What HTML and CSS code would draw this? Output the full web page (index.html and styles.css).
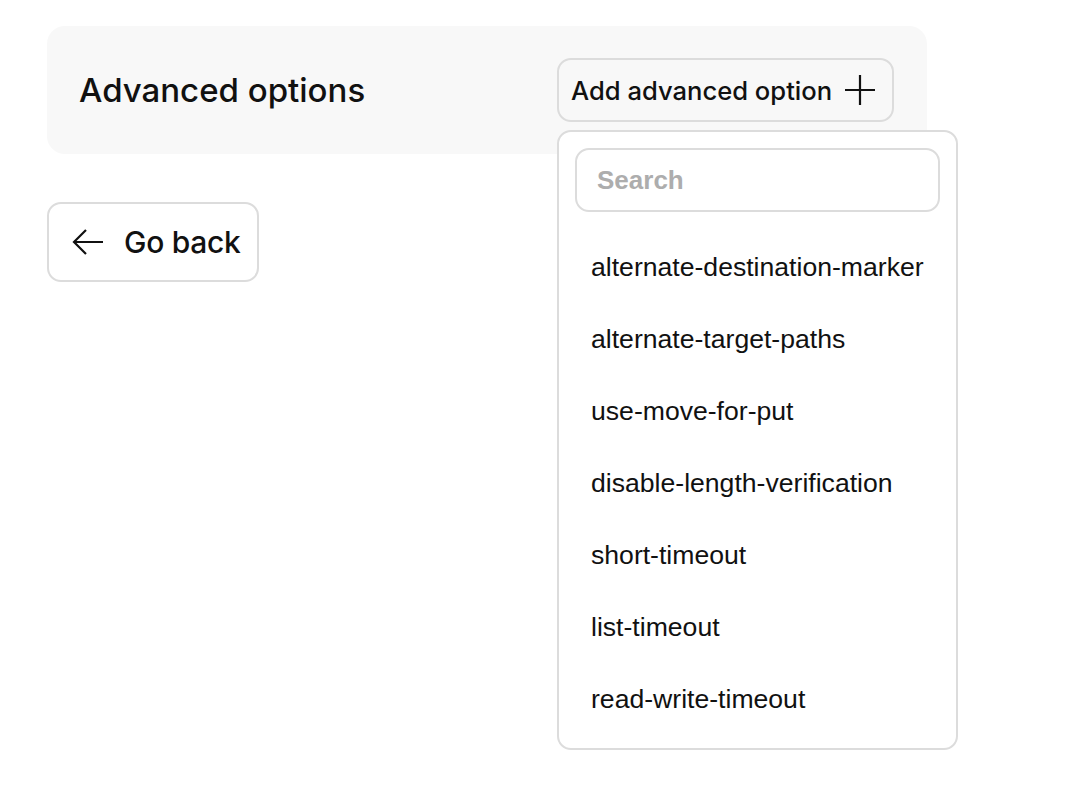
FILE: index.html
```html
<!DOCTYPE html>
<html>
<head>
<meta charset="utf-8">
<link rel="stylesheet" href="styles.css">
</head>
<body>
<div class="page">
  <div class="panel">
    <h2 class="title">Advanced options</h2>
    <div class="add-wrap">
      <button class="add-btn">Add advanced option
        <svg class="plus" width="30" height="30" viewBox="0 0 30 30"><path d="M15 0V30M0 15H30" stroke="#111" stroke-width="2.2" fill="none"/></svg>
      </button>
      <div class="dropdown">
        <div class="search">Search</div>
        <ul class="list">
          <li>alternate-destination-marker</li>
          <li>alternate-target-paths</li>
          <li>use-move-for-put</li>
          <li>disable-length-verification</li>
          <li>short-timeout</li>
          <li>list-timeout</li>
          <li>read-write-timeout</li>
        </ul>
      </div>
    </div>
  </div>
  <button class="back-btn">
    <svg class="arrow" width="32" height="28" viewBox="0 0 32 28"><path d="M31 14H2M14 2L2 14L14 26" stroke="#111" stroke-width="2.2" fill="none"/></svg>
    Go back
  </button>
</div>
</body>
</html>
```

FILE: styles.css
```css
html, body {
  margin: 0;
  padding: 0;
  background: #ffffff;
}
body {
  min-height: 796px;
}
.page {
  min-height: 796px;
  box-sizing: border-box;
  padding: 26px 0 0 47px;
  font-family: Inter, "Liberation Sans", sans-serif;
  color: #111;
}
.panel {
  width: 880px;
  height: 128px;
  box-sizing: border-box;
  background: #f8f8f8;
  border-radius: 18px;
  display: flex;
  align-items: center;
  justify-content: space-between;
  padding: 0 33px 0 32px;
}
.title {
  margin: 0;
  font-size: 33px;
  font-weight: 500;
}
.add-wrap {
  position: relative;
}
.add-btn {
  width: 337px;
  height: 64px;
  box-sizing: border-box;
  border: 2px solid #dcdcdc;
  border-radius: 14px;
  background: #f8f8f8;
  display: flex;
  align-items: center;
  padding: 0 0 0 12px;
  font-family: Inter, "Liberation Sans", sans-serif;
  font-size: 25.6px;
  font-weight: 500;
  color: #111;
}
.plus {
  margin-left: 13px;
}
.dropdown {
  position: absolute;
  left: 0;
  top: 72px;
  width: 401px;
  height: 620px;
  box-sizing: border-box;
  background: #fff;
  border: 2px solid #dcdcdc;
  border-radius: 14px;
  padding: 16px;
  z-index: 5;
}
.search {
  width: 365px;
  height: 64px;
  box-sizing: border-box;
  border: 2px solid #dcdcdc;
  border-radius: 14px;
  padding: 0 20px;
  display: flex;
  align-items: center;
  font-family: "Liberation Sans", Arial, sans-serif;
  font-weight: 700;
  font-size: 26px;
  color: #adadad;
}
.list {
  list-style: none;
  margin: 19px 0 0 0;
  padding: 0;
}
.list li {
  height: 72px;
  display: flex;
  align-items: center;
  padding-left: 16px;
  font-family: "Liberation Sans", Arial, sans-serif;
  font-size: 26.6px;
  color: #111;
}
.back-btn {
  margin-top: 48px;
  width: 212px;
  height: 80px;
  box-sizing: border-box;
  border: 2px solid #dcdcdc;
  border-radius: 14px;
  background: #fff;
  display: flex;
  align-items: center;
  padding: 0 0 0 23px;
  font-family: Inter, "Liberation Sans", sans-serif;
  font-size: 30px;
  font-weight: 500;
  color: #111;
  letter-spacing: -0.3px;
}
.arrow {
  margin-right: 20px;
}
```
